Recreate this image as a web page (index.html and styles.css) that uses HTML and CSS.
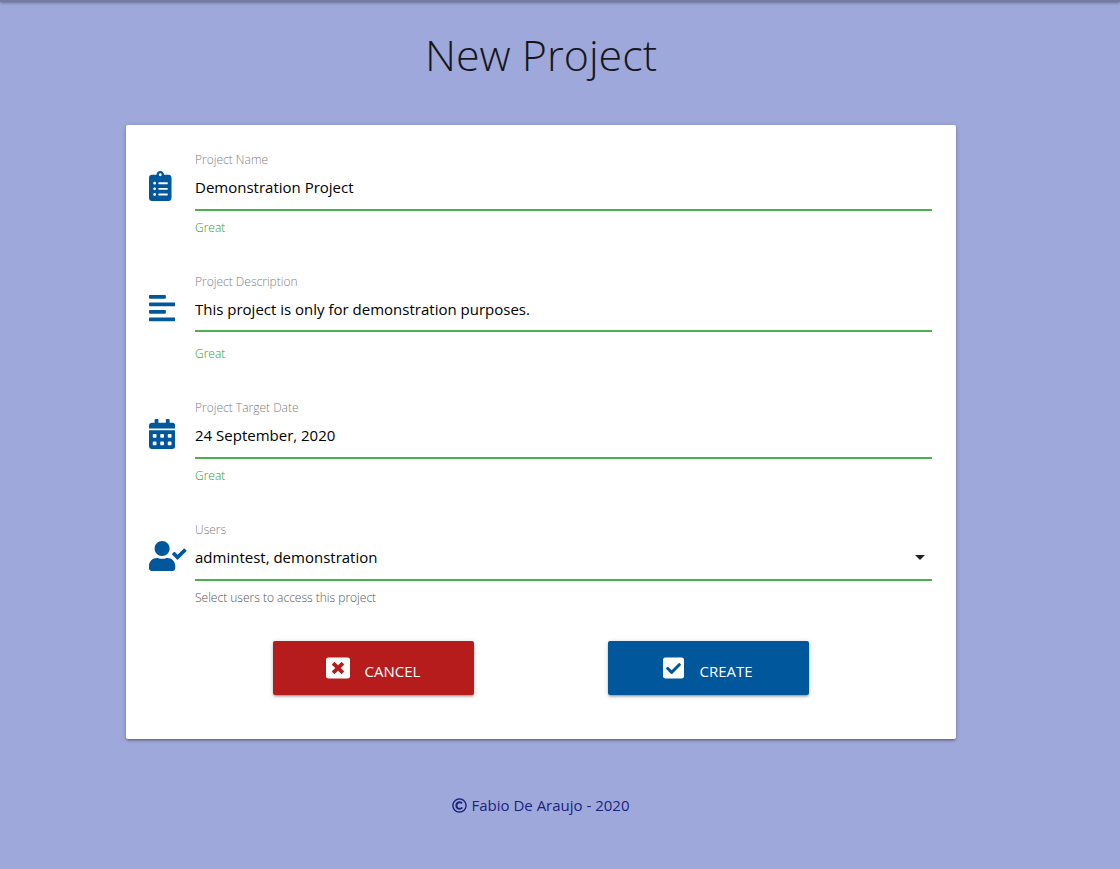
FILE: index.html
```html
<!DOCTYPE html>
<html lang="en">
<head>
<meta charset="utf-8">
<title>New Project</title>
<link rel="stylesheet" href="styles.css">
</head>
<body>
<div class="topbar"></div>
<main class="page">
  <h1 class="title">New Project</h1>
  <form class="card">
    <div class="field">
      <svg class="icon" viewBox="0 0 384 512" aria-hidden="true"><path d="M336 64h-80c0-35.300-28.700-64-64-64s-64 28.700-64 64H48C21.500 64 0 85.500 0 112v352c0 26.500 21.500 48 48 48h288c26.500 0 48-21.500 48-48V112c0-26.500-21.500-48-48-48zM96 424c-13.300 0-24-10.700-24-24s10.700-24 24-24 24 10.700 24 24-10.700 24-24 24zm0-96c-13.300 0-24-10.700-24-24s10.700-24 24-24 24 10.700 24 24-10.700 24-24 24zm0-96c-13.300 0-24-10.700-24-24s10.700-24 24-24 24 10.700 24 24-10.700 24-24 24zm96-192c13.300 0 24 10.700 24 24s-10.700 24-24 24-24-10.700-24-24 10.700-24 24-24zm128 368c0 4.400-3.600 8-8 8H168c-4.400 0-8-3.600-8-8v-16c0-4.400 3.600-8 8-8h144c4.400 0 8 3.600 8 8v16zm0-96c0 4.400-3.600 8-8 8H168c-4.400 0-8-3.600-8-8v-16c0-4.400 3.600-8 8-8h144c4.400 0 8 3.600 8 8v16zm0-96c0 4.400-3.600 8-8 8H168c-4.400 0-8-3.600-8-8v-16c0-4.400 3.600-8 8-8h144c4.400 0 8 3.600 8 8v16z"/></svg>
      <div class="control">
        <label class="label" for="name">Project Name</label>
        <input class="input" id="name" type="text" value="Demonstration Project">
        <span class="helper valid">Great</span>
      </div>
    </div>
    <div class="field">
      <svg class="icon" viewBox="0 0 448 512" aria-hidden="true"><path d="M12.830 352h262.340A12.820 12.820 0 0 0 288 339.170v-38.340A12.820 12.820 0 0 0 275.170 288H12.830A12.820 12.820 0 0 0 0 300.830v38.340A12.820 12.820 0 0 0 12.830 352zm0-256h262.340A12.820 12.820 0 0 0 288 83.170V44.830A12.820 12.820 0 0 0 275.170 32H12.830A12.820 12.820 0 0 0 0 44.830v38.340A12.820 12.820 0 0 0 12.830 96zM432 160H16a16 16 0 0 0-16 16v32a16 16 0 0 0 16 16h416a16 16 0 0 0 16-16v-32a16 16 0 0 0-16-16zm0 256H16a16 16 0 0 0-16 16v32a16 16 0 0 0 16 16h416a16 16 0 0 0 16-16v-32a16 16 0 0 0-16-16z"/></svg>
      <div class="control">
        <label class="label" for="description">Project Description</label>
        <textarea class="input area" id="description" rows="1">This project is only for demonstration purposes.</textarea>
        <span class="helper valid below-area">Great</span>
      </div>
    </div>
    <div class="field">
      <svg class="icon" viewBox="0 0 448 512" aria-hidden="true"><path d="M0 464c0 26.500 21.500 48 48 48h352c26.500 0 48-21.500 48-48V192H0v272zm320-196c0-6.600 5.400-12 12-12h40c6.600 0 12 5.400 12 12v40c0 6.600-5.400 12-12 12h-40c-6.600 0-12-5.400-12-12v-40zm0 128c0-6.600 5.400-12 12-12h40c6.600 0 12 5.400 12 12v40c0 6.600-5.400 12-12 12h-40c-6.600 0-12-5.400-12-12v-40zM192 268c0-6.600 5.400-12 12-12h40c6.600 0 12 5.400 12 12v40c0 6.600-5.400 12-12 12h-40c-6.600 0-12-5.400-12-12v-40zm0 128c0-6.600 5.400-12 12-12h40c6.600 0 12 5.400 12 12v40c0 6.600-5.400 12-12 12h-40c-6.600 0-12-5.400-12-12v-40zM64 268c0-6.600 5.400-12 12-12h40c6.600 0 12 5.400 12 12v40c0 6.600-5.400 12-12 12H76c-6.600 0-12-5.400-12-12v-40zm0 128c0-6.600 5.400-12 12-12h40c6.600 0 12 5.400 12 12v40c0 6.600-5.400 12-12 12H76c-6.600 0-12-5.400-12-12v-40zM400 64h-48V16c0-8.800-7.200-16-16-16h-32c-8.800 0-16 7.200-16 16v48H160V16c0-8.800-7.200-16-16-16h-32c-8.800 0-16 7.200-16 16v48H48C21.500 64 0 85.500 0 112v48h448v-48c0-26.500-21.500-48-48-48z"/></svg>
      <div class="control">
        <label class="label" for="date">Project Target Date</label>
        <input class="input" id="date" type="text" value="24 September, 2020">
        <span class="helper valid">Great</span>
      </div>
    </div>
    <div class="field">
      <svg class="icon" viewBox="0 0 640 512" aria-hidden="true"><path d="M224 256c70.700 0 128-57.300 128-128S294.700 0 224 0 96 57.300 96 128s57.300 128 128 128zm89.600 32h-16.700c-22.200 10.200-46.900 16-72.900 16s-50.600-5.800-72.900-16h-16.700C60.200 288 0 348.200 0 422.400V464c0 26.500 21.500 48 48 48h352c26.500 0 48-21.500 48-48v-41.600c0-74.200-60.200-134.400-134.400-134.400zm323-128.400l-27.800-28.100c-4.600-4.700-12.100-4.700-16.800-.1l-104.800 104-45.500-45.800c-4.600-4.700-12.100-4.700-16.800-.1l-28.100 27.900c-4.700 4.600-4.700 12.100-.1 16.800l81.700 82.300c4.600 4.700 12.100 4.700 16.800.1l141.300-140.200c4.600-4.700 4.700-12.200.1-16.800z"/></svg>
      <div class="control">
        <label class="label" for="users">Users</label>
        <div class="select">
          <select class="input" id="users"><option>admintest, demonstration</option></select>
          <svg class="caret" viewBox="0 0 10 5" aria-hidden="true"><path d="M0 0h10L5 5z"/></svg>
        </div>
        <span class="helper">Select users to access this project</span>
      </div>
    </div>
    <div class="actions">
      <button class="button cancel" type="button">
        <svg class="button-icon" viewBox="0 0 512 512" aria-hidden="true"><path d="M464 32H48C21.500 32 0 53.500 0 80v352c0 26.500 21.500 48 48 48h416c26.500 0 48-21.500 48-48V80c0-26.500-21.500-48-48-48zm-83.600 290.500c4.800 4.800 4.800 12.600 0 17.400l-40.500 40.500c-4.800 4.800-12.600 4.800-17.400 0L256 313.300l-66.500 67.100c-4.800 4.800-12.600 4.800-17.400 0l-40.500-40.500c-4.800-4.800-4.800-12.600 0-17.400l67.100-66.500-67.100-66.500c-4.800-4.800-4.800-12.600 0-17.400l40.500-40.500c4.800-4.800 12.600-4.800 17.400 0l66.500 67.100 66.500-67.100c4.800-4.800 12.600-4.800 17.400 0l40.500 40.500c4.800 4.800 4.800 12.600 0 17.400L313.300 256l67.100 66.500z"/></svg>
        <span class="button-text">CANCEL</span>
      </button>
      <button class="button create" type="button">
        <svg class="button-icon" viewBox="0 0 448 512" aria-hidden="true"><path d="M400 480H48c-26.510 0-48-21.490-48-48V80c0-26.510 21.490-48 48-48h352c26.510 0 48 21.490 48 48v352c0 26.510-21.490 48-48 48zm-204.686-98.059l184-184c6.248-6.248 6.248-16.379 0-22.627l-22.627-22.627c-6.248-6.248-16.379-6.249-22.628 0L184 302.745l-70.059-70.059c-6.248-6.248-16.379-6.248-22.628 0l-22.627 22.627c-6.248 6.248-6.248 16.379 0 22.627l104 104c6.249 6.250 16.379 6.250 22.628.001z"/></svg>
        <span class="button-text">CREATE</span>
      </button>
    </div>
  </form>
  <footer class="footer">
    <svg class="copyright" viewBox="0 0 512 512" aria-hidden="true"><path d="M256 8C119 8 8 119 8 256s111 248 248 248 248-111 248-248S393 8 256 8zm0 448c-110.500 0-200-89.500-200-200S145.500 56 256 56s200 89.500 200 200-89.500 200-200 200zm107-102c-2 2-41 48-104 48-85 0-145-63-145-147 0-83 63-144 144-144 61 0 94 34 97 38 4 4 4 10 2 14l-23 35c-3 5-11 6-15 2-3-3-28-25-59-25-49 0-76 36-76 79 0 40 26 83 77 83 39 0 64-27 67-30 4-4 12-4 16 1l22 33c3 4 2 9-3 13z"/></svg>
    <span>Fabio De Araujo - 2020</span>
  </footer>
</main>
</body>
</html>
```
FILE: styles.css
```css
* {
  box-sizing: border-box;
}

body {
  margin: 0;
  background: #9fa8da;
  font-family: "Open Sans", "Noto Sans", sans-serif;
  font-weight: 300;
}

.topbar {
  height: 2px;
  background: #747aa0;
  box-shadow: 0 1px 3px rgba(0, 0, 0, 0.4);
}

.page {
  padding: 21px 164px 48px 126px;
}

.title {
  margin: 0 0 38px;
  font-size: 43px;
  font-weight: 300;
  line-height: 64px;
  text-align: center;
  color: #15171c;
}

.card {
  padding: 25px 24px 44px 23px;
  background: #fff;
  border-radius: 2px;
  box-shadow: 0 2px 2px 0 rgba(0, 0, 0, 0.14), 0 3px 1px -2px rgba(0, 0, 0, 0.12), 0 1px 5px 0 rgba(0, 0, 0, 0.2);
}

.field {
  display: grid;
  grid-template-columns: 46px 1fr;
}

.field + .field {
  margin-top: 34px;
}

.icon {
  height: 30px;
  margin-top: 21px;
  fill: #01579b;
}

.control {
  display: flex;
  flex-direction: column;
  min-width: 0;
}

.label {
  font-size: 12px;
  line-height: 20px;
  color: #808080;
}

.input {
  display: block;
  width: 100%;
  height: 41px;
  margin: 0;
  padding: 0 0 5px;
  border: 0;
  border-bottom: 2px solid #4caf50;
  border-radius: 0;
  outline: 0;
  background: transparent;
  color: #000;
  font: inherit;
  font-size: 15px;
  font-weight: 400;
  line-height: 34px;
  appearance: none;
}

.area {
  height: 40px;
  padding-bottom: 4px;
  resize: none;
  overflow: hidden;
}

.select {
  position: relative;
}

.caret {
  position: absolute;
  top: 15px;
  right: 7px;
  width: 10px;
  height: 5px;
  fill: #212121;
  pointer-events: none;
}

.helper {
  margin-top: 7px;
  font-size: 12px;
  line-height: 20px;
  color: #555;
}

.valid {
  color: #2f9e34;
}

.below-area {
  margin-top: 12px;
}

.actions {
  display: flex;
  justify-content: center;
  gap: 134px;
  margin-top: 33px;
}

.button {
  display: flex;
  align-items: center;
  justify-content: center;
  gap: 15px;
  width: 201px;
  height: 54px;
  padding: 0;
  border: 0;
  border-radius: 2px;
  color: #fff;
  font: inherit;
  font-size: 15px;
  font-weight: 400;
  box-shadow: 0 2px 2px 0 rgba(0, 0, 0, 0.14), 0 3px 1px -2px rgba(0, 0, 0, 0.12), 0 1px 5px 0 rgba(0, 0, 0, 0.2);
}

.cancel {
  background: #b71c1c;
}

.create {
  background: #01579b;
}

.button-icon {
  height: 24px;
  fill: #fff;
}

.button-text {
  padding-top: 6px;
}

.footer {
  display: flex;
  align-items: center;
  justify-content: center;
  gap: 4px;
  margin-top: 54px;
  color: #1a237e;
  font-size: 15px;
  font-weight: 500;
  line-height: 24px;
}

.copyright {
  height: 15px;
  fill: #1a237e;
}
```
